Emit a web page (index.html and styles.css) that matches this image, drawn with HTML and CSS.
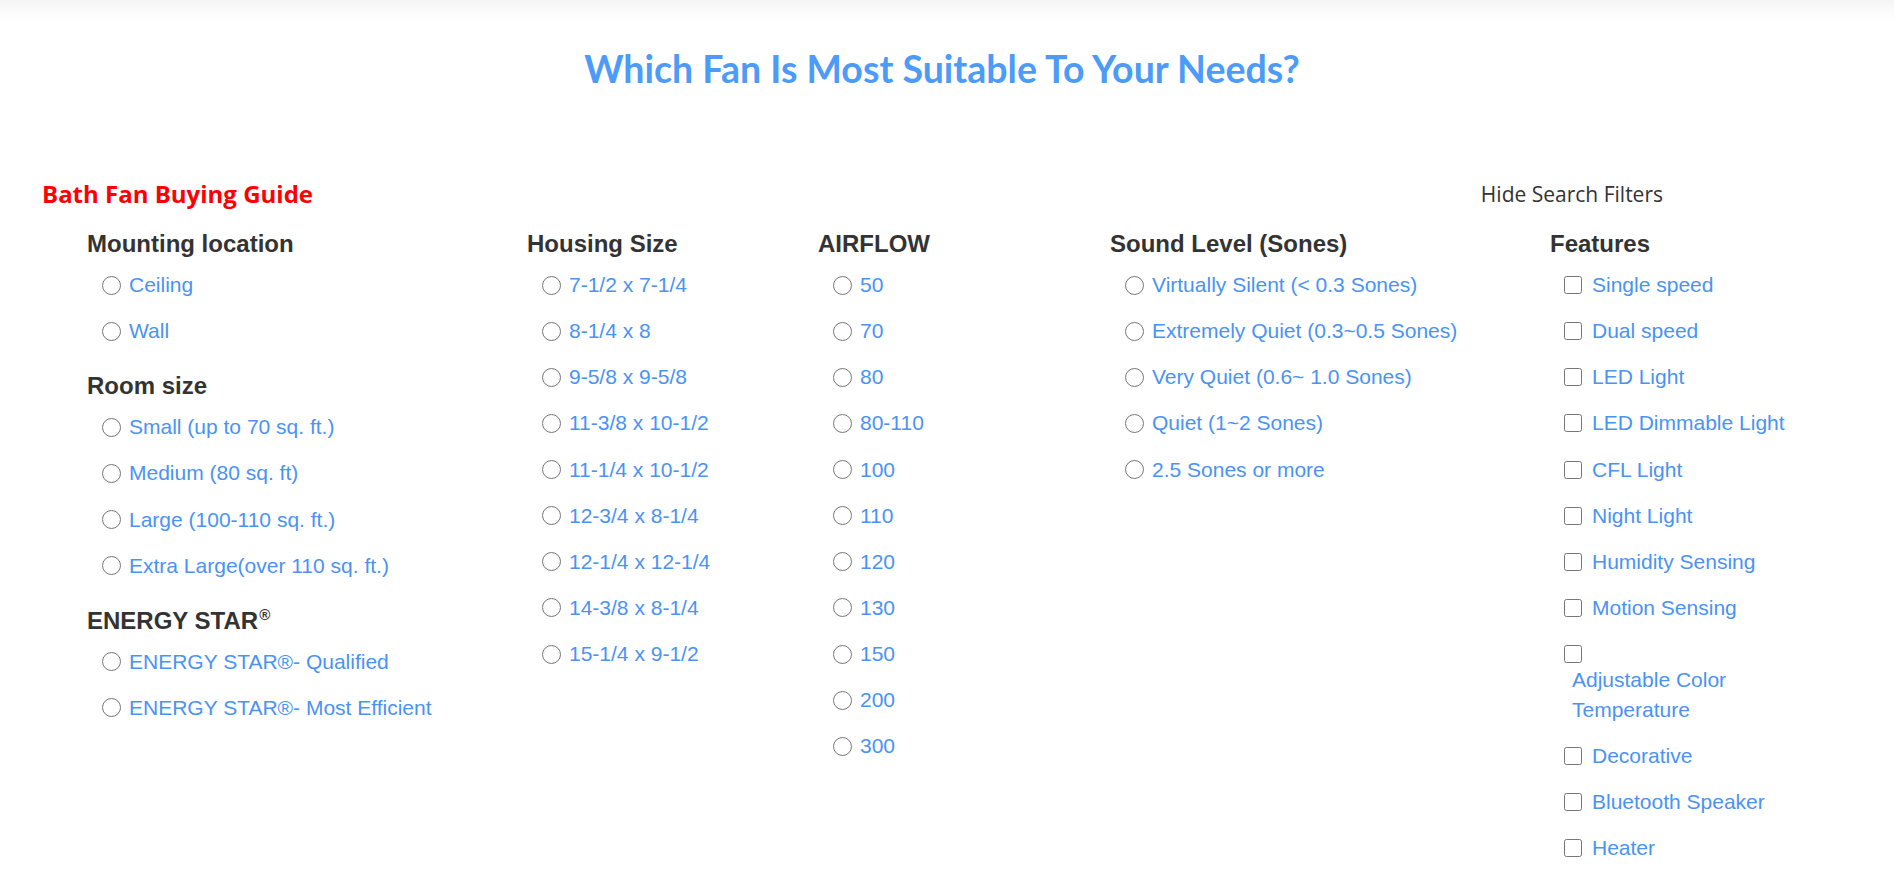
FILE: index.html
```html
<!DOCTYPE html>
<html lang="en">
<head>
<meta charset="utf-8">
<title>Bath Fan Buying Guide</title>
<link rel="stylesheet" href="styles.css">
</head>
<body>
<div class="topbar"></div>
<h1 class="title">Which Fan Is Most Suitable To Your Needs?</h1>
<div class="guide-row">
  <span class="guide-title">Bath Fan Buying Guide</span>
  <span class="hide-filters">Hide Search Filters</span>
</div>
<div class="filters">
  <div class="col">
    <h4 class="group-title first">Mounting location</h4>
    <ul class="opts">
      <li><input type="radio" name="mount" id="m1"><label for="m1">Ceiling</label></li>
      <li><input type="radio" name="mount" id="m2"><label for="m2">Wall</label></li>
    </ul>
    <h4 class="group-title">Room size</h4>
    <ul class="opts">
      <li><input type="radio" name="room" id="r1"><label for="r1">Small (up to 70 sq. ft.)</label></li>
      <li><input type="radio" name="room" id="r2"><label for="r2">Medium (80 sq. ft)</label></li>
      <li><input type="radio" name="room" id="r3"><label for="r3">Large (100-110 sq. ft.)</label></li>
      <li><input type="radio" name="room" id="r4"><label for="r4">Extra Large(over 110 sq. ft.)</label></li>
    </ul>
    <h4 class="group-title">ENERGY STAR<sup class="reg">®</sup></h4>
    <ul class="opts">
      <li><input type="radio" name="es" id="e1"><label for="e1">ENERGY STAR®- Qualified</label></li>
      <li><input type="radio" name="es" id="e2"><label for="e2">ENERGY STAR®- Most Efficient</label></li>
    </ul>
  </div>
  <div class="col">
    <h4 class="group-title first">Housing Size</h4>
    <ul class="opts">
      <li><input type="radio" name="hs" id="h1"><label for="h1">7-1/2 x 7-1/4</label></li>
      <li><input type="radio" name="hs" id="h2"><label for="h2">8-1/4 x 8</label></li>
      <li><input type="radio" name="hs" id="h3"><label for="h3">9-5/8 x 9-5/8</label></li>
      <li><input type="radio" name="hs" id="h4"><label for="h4">11-3/8 x 10-1/2</label></li>
      <li><input type="radio" name="hs" id="h5"><label for="h5">11-1/4 x 10-1/2</label></li>
      <li><input type="radio" name="hs" id="h6"><label for="h6">12-3/4 x 8-1/4</label></li>
      <li><input type="radio" name="hs" id="h7"><label for="h7">12-1/4 x 12-1/4</label></li>
      <li><input type="radio" name="hs" id="h8"><label for="h8">14-3/8 x 8-1/4</label></li>
      <li><input type="radio" name="hs" id="h9"><label for="h9">15-1/4 x 9-1/2</label></li>
    </ul>
  </div>
  <div class="col">
    <h4 class="group-title first">AIRFLOW</h4>
    <ul class="opts">
      <li><input type="radio" name="af" id="a1"><label for="a1">50</label></li>
      <li><input type="radio" name="af" id="a2"><label for="a2">70</label></li>
      <li><input type="radio" name="af" id="a3"><label for="a3">80</label></li>
      <li><input type="radio" name="af" id="a4"><label for="a4">80-110</label></li>
      <li><input type="radio" name="af" id="a5"><label for="a5">100</label></li>
      <li><input type="radio" name="af" id="a6"><label for="a6">110</label></li>
      <li><input type="radio" name="af" id="a7"><label for="a7">120</label></li>
      <li><input type="radio" name="af" id="a8"><label for="a8">130</label></li>
      <li><input type="radio" name="af" id="a9"><label for="a9">150</label></li>
      <li><input type="radio" name="af" id="a10"><label for="a10">200</label></li>
      <li><input type="radio" name="af" id="a11"><label for="a11">300</label></li>
    </ul>
  </div>
  <div class="col">
    <h4 class="group-title first">Sound Level (Sones)</h4>
    <ul class="opts">
      <li><input type="radio" name="sl" id="s1"><label for="s1">Virtually Silent (&lt; 0.3 Sones)</label></li>
      <li><input type="radio" name="sl" id="s2"><label for="s2">Extremely Quiet (0.3~0.5 Sones)</label></li>
      <li><input type="radio" name="sl" id="s3"><label for="s3">Very Quiet (0.6~ 1.0 Sones)</label></li>
      <li><input type="radio" name="sl" id="s4"><label for="s4">Quiet (1~2 Sones)</label></li>
      <li><input type="radio" name="sl" id="s5"><label for="s5">2.5 Sones or more</label></li>
    </ul>
  </div>
  <div class="col">
    <h4 class="group-title first">Features</h4>
    <ul class="opts checks">
      <li><input type="checkbox" id="f1"><label for="f1">Single speed</label></li>
      <li><input type="checkbox" id="f2"><label for="f2">Dual speed</label></li>
      <li><input type="checkbox" id="f3"><label for="f3">LED Light</label></li>
      <li><input type="checkbox" id="f4"><label for="f4">LED Dimmable Light</label></li>
      <li><input type="checkbox" id="f5"><label for="f5">CFL Light</label></li>
      <li><input type="checkbox" id="f6"><label for="f6">Night Light</label></li>
      <li><input type="checkbox" id="f7"><label for="f7">Humidity Sensing</label></li>
      <li><input type="checkbox" id="f8"><label for="f8">Motion Sensing</label></li>
      <li><input type="checkbox" id="f9"><label for="f9">Adjustable Color Temperature</label></li>
      <li><input type="checkbox" id="f10"><label for="f10">Decorative</label></li>
      <li><input type="checkbox" id="f11"><label for="f11">Bluetooth Speaker</label></li>
      <li><input type="checkbox" id="f12"><label for="f12">Heater</label></li>
    </ul>
  </div>
</div>
</body>
</html>
```

FILE: styles.css
```css
html, body {
  margin: 0;
  padding: 0;
  background: #ffffff;
}

body {
  font-family: "Liberation Sans", Arial, sans-serif;
  color: #333333;
}

.topbar {
  height: 22px;
  background: linear-gradient(to bottom, #f4f4f4 0%, #fbfbfb 50%, #ffffff 100%);
}

.title {
  margin: 24px 0 0;
  padding-right: 10px;
  text-align: center;
  font-family: Lato, "Open Sans", sans-serif;
  font-weight: 700;
  font-size: 37.5px;
  line-height: 45px;
  color: #4c9bf8;
}

.guide-row {
  display: flex;
  align-items: center;
  justify-content: space-between;
  margin-top: 88px;
  padding: 0 231px 0 42px;
  height: 30px;
}

.guide-title {
  font-family: "Open Sans", sans-serif;
  font-weight: 700;
  font-size: 24px;
  line-height: 30px;
  color: #ff0000;
}

.hide-filters {
  font-family: "Open Sans", sans-serif;
  font-size: 21px;
  line-height: 30px;
  color: #333333;
}

.filters {
  display: grid;
  grid-template-columns: 440px 291px 292px 440px 250px;
  align-items: start;
  margin-top: 21px;
  padding-left: 87px;
}

.group-title {
  margin: 18px 0 4px;
  font-size: 24px;
  line-height: 28px;
  font-weight: 700;
  color: #333333;
}

.group-title.first {
  margin-top: 0;
}

.reg {
  font-size: 15px;
  line-height: 0;
  vertical-align: 9px;
  margin-left: 1px;
}

.opts {
  list-style: none;
  margin: 0;
  padding: 0 0 0 15px;
}

.checks {
  padding-left: 14px;
}

.opts li {
  padding: 8.07px 0;
  font-size: 21px;
  line-height: 26px;
}

.opts input {
  margin: 0;
  vertical-align: middle;
}

.opts input[type="radio"] {
  width: 19px;
  height: 19px;
}

.opts input[type="checkbox"] {
  width: 18px;
  height: 18px;
  margin-right: 2px;
}

.opts label {
  display: inline-block;
  vertical-align: middle;
  padding-left: 8px;
  line-height: 30px;
  color: #4a93f5;
  cursor: pointer;
}
```
